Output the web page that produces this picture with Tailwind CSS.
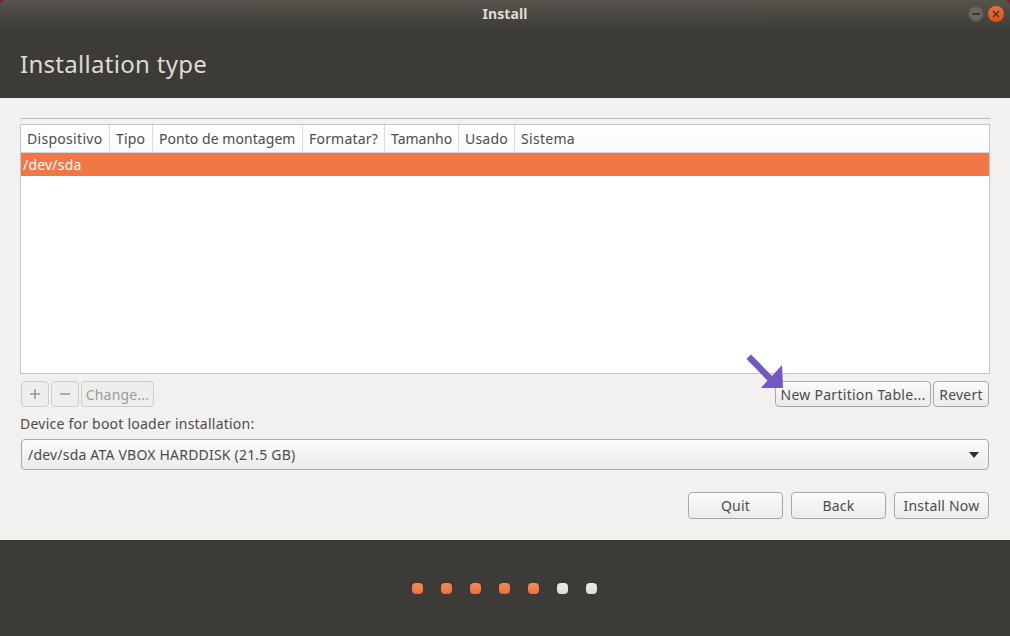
<!DOCTYPE html>
<html lang="en">
<head>
    <meta charset="UTF-8">
    <title>Install</title>
    <script src="https://cdn.jsdelivr.net/npm/@tailwindcss/browser@4"></script>
</head>
<body class="bg-[#7a1f3d] overflow-hidden">
<div class="w-[1010px] h-[636px] flex flex-col rounded-t-[6px] overflow-hidden font-['Noto_Sans',sans-serif] text-[14px] tracking-[0.2px] text-[#4c4c4c]">

    <!-- Title bar -->
    <div class="h-[28px] shrink-0 relative flex items-center justify-center pb-[2px] bg-gradient-to-b from-[#57544c] to-[#3e3d39]">
        <span class="text-[14px] font-bold tracking-[0.1px] text-[#dfdbd2]">Install</span>
        <div class="absolute right-[6px] top-[6px] flex gap-[4px]">
            <div class="w-[16px] h-[16px] rounded-full bg-[#68675f] border border-[#55544d] flex items-center justify-center">
                <div class="w-[8px] h-[2px] bg-[#3c3b37]"></div>
            </div>
            <div class="w-[16px] h-[16px] rounded-full bg-gradient-to-b from-[#f2703c] to-[#df4a16] flex items-center justify-center">
                <svg width="8" height="8" viewBox="0 0 8 8"><path d="M1 1l6 6M7 1l-6 6" stroke="#3c3b37" stroke-width="1.5"/></svg>
            </div>
        </div>
    </div>

    <!-- Header -->
    <div class="h-[70px] shrink-0 bg-[#3c3b37] pl-[20px] pt-[17px]">
        <h1 class="text-[24px] leading-[38px] tracking-[0.3px] text-[#dfdbd2]">Installation type</h1>
    </div>

    <!-- Content -->
    <div class="h-[442px] shrink-0 bg-[#f2f1f0] px-[20px] pt-[20px]">
        <div class="h-[1px] bg-[#bdbcb9]"></div>

        <!-- Partition table -->
        <div class="mt-[5px] h-[250px] bg-white border border-[#c8c6c2]">
            <div class="h-[28px] flex border-b border-[#d6d5d2] bg-gradient-to-b from-white to-[#fafafa]">
                <div class="w-[89px] pl-[6px] border-r border-[#dcdbd8] leading-[27px] tracking-[0.3px]">Dispositivo</div>
                <div class="w-[43px] pl-[6px] border-r border-[#dcdbd8] leading-[27px]">Tipo</div>
                <div class="w-[150px] pl-[6px] border-r border-[#dcdbd8] leading-[27px] tracking-[0.05px]">Ponto de montagem</div>
                <div class="w-[82px] pl-[6px] border-r border-[#dcdbd8] leading-[27px] tracking-[0.2px]">Formatar?</div>
                <div class="w-[74px] pl-[6px] border-r border-[#dcdbd8] leading-[27px] tracking-[0px]">Tamanho</div>
                <div class="w-[56px] pl-[6px] border-r border-[#dcdbd8] leading-[27px] tracking-[0.2px]">Usado</div>
                <div class="pl-[6px] leading-[27px] tracking-[0.3px]">Sistema</div>
            </div>
            <div class="h-[23px] bg-[#f07846] text-white pl-[2px] leading-[23px]">/dev/sda</div>
        </div>

        <!-- Table buttons -->
        <div class="mt-[7px] h-[27px] flex gap-[2px] pl-[1px] pr-[1px] relative">
            <button class="w-[28px] h-[26px] rounded-[4px] border border-[#cfcdca] bg-[#efeeed] flex items-center justify-center">
                <svg width="10" height="10" viewBox="0 0 10 10"><path d="M5 0v10M0 5h10" stroke="#9a9996" stroke-width="1.6"/></svg>
            </button>
            <button class="w-[28px] h-[26px] rounded-[4px] border border-[#cfcdca] bg-[#efeeed] flex items-center justify-center">
                <svg width="10" height="10" viewBox="0 0 10 10"><path d="M0 5h10" stroke="#9a9996" stroke-width="1.6"/></svg>
            </button>
            <button class="w-[73px] h-[26px] rounded-[4px] border border-[#cfcdca] bg-[#efeeed] text-[#9c9b99]">Change...</button>
            <div class="ml-auto flex gap-[2px]">
                <button class="w-[156px] h-[26px] rounded-[4px] border border-[#aaa9a6] bg-gradient-to-b from-[#fbfbfb] to-[#ecebea] tracking-[0.27px]">New Partition Table...</button>
                <button class="w-[56px] h-[26px] rounded-[4px] border border-[#aaa9a6] bg-gradient-to-b from-[#fbfbfb] to-[#ecebea]">Revert</button>
            </div>
            <!-- Annotation arrow -->
            <svg class="absolute left-[726px] top-[-28px]" width="40" height="36" viewBox="0 0 40 36">
                <path d="M0.5 6L5 1.5L26 23L36 12L37 35L15 35L21.5 27.6Z" fill="#7357c4"/>
            </svg>
        </div>

        <!-- Boot loader -->
        <div class="mt-[6px] h-[20px] leading-[20px] tracking-[0.23px]">Device for boot loader installation:</div>
        <div class="mt-[5px] mx-[1px] h-[31px] rounded-[4px] border border-[#aaa9a6] bg-gradient-to-b from-[#fbfbfb] to-[#ecebea] flex items-center justify-between pl-[6px] pr-[9px]">
            <span>/dev/sda ATA VBOX HARDDISK (21.5 GB)</span>
            <svg width="10" height="6" viewBox="0 0 10 6"><path d="M0 0h10L5 6Z" fill="#2e2e2e"/></svg>
        </div>

        <!-- Navigation -->
        <div class="mt-[22px] pr-[1px] flex justify-end gap-[8px]">
            <button class="w-[95px] h-[27px] rounded-[4px] border border-[#aaa9a6] bg-gradient-to-b from-[#fbfbfb] to-[#ecebea]">Quit</button>
            <button class="w-[95px] h-[27px] rounded-[4px] border border-[#aaa9a6] bg-gradient-to-b from-[#fbfbfb] to-[#ecebea]">Back</button>
            <button class="w-[95px] h-[27px] rounded-[4px] border border-[#aaa9a6] bg-gradient-to-b from-[#fbfbfb] to-[#ecebea]">Install Now</button>
        </div>
    </div>

    <!-- Progress dots -->
    <div class="flex-1 bg-[#3c3b37] flex justify-center gap-[18px] pt-[43px] pr-[1px]">
        <div class="w-[11px] h-[11px] rounded-[4px] bg-gradient-to-b from-[#f58a5a] to-[#ec6f3d]"></div>
        <div class="w-[11px] h-[11px] rounded-[4px] bg-gradient-to-b from-[#f58a5a] to-[#ec6f3d]"></div>
        <div class="w-[11px] h-[11px] rounded-[4px] bg-gradient-to-b from-[#f58a5a] to-[#ec6f3d]"></div>
        <div class="w-[11px] h-[11px] rounded-[4px] bg-gradient-to-b from-[#f58a5a] to-[#ec6f3d]"></div>
        <div class="w-[11px] h-[11px] rounded-[4px] bg-gradient-to-b from-[#f58a5a] to-[#ec6f3d]"></div>
        <div class="w-[11px] h-[11px] rounded-[4px] bg-gradient-to-b from-[#ececec] to-[#dcdcdc]"></div>
        <div class="w-[11px] h-[11px] rounded-[4px] bg-gradient-to-b from-[#ececec] to-[#dcdcdc]"></div>
    </div>
</div>
</body>
</html>
